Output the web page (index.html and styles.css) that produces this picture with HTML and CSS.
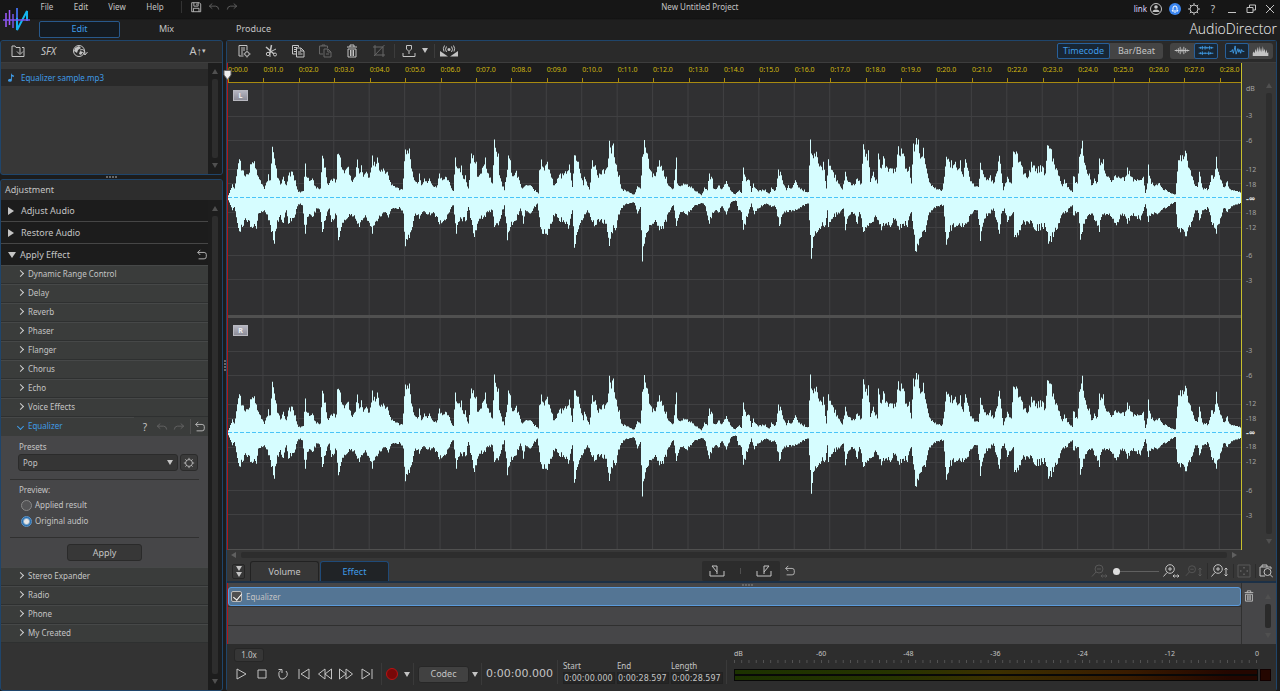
FILE: index.html
```html
<!DOCTYPE html>
<html lang="en">
<head>
    <meta charset="UTF-8">
    <meta name="viewport" content="width=device-width, initial-scale=1.0">
    <title>AudioDirector - New Untitled Project</title>
    <link rel="stylesheet" href="styles.css">
</head>
<body>
    <!-- shared icons -->
    <svg class="sprite" aria-hidden="true">
        <symbol id="i-save" viewBox="0 0 14 14"><path d="M2 2h9l1.500 1.500V12.500H2zM4.500 2v4h5V2M4 12.500V8.500h6.500v4M8 3v2"/></symbol>
        <symbol id="i-back" viewBox="0 0 14 14"><path d="M5 3L1.500 6L5 9M1.500 6H9q3 0 3.500 4"/></symbol>
        <symbol id="i-forward" viewBox="0 0 14 14"><path d="M9 3l3.500 3L9 9M12.500 6H5q-3 0-3.500 4"/></symbol>
        <symbol id="i-reset" viewBox="0 0 14 14"><path d="M5 1L2 4l3 3M2 4h7.500q2.500 0 2.500 2.500v2.500q0 2.500-2.500 2.500H3"/></symbol>
        <symbol id="i-gear" viewBox="0 0 14 14"><circle cx="7" cy="7" r="4"/><path d="M7 1v2M7 11v2M1 7h2M11 7h2M2.800 2.800l1.400 1.400M9.800 9.800l1.400 1.400M2.800 11.200l1.400-1.400M9.800 4.200l1.400-1.400"/></symbol>
        <symbol id="i-import" viewBox="0 0 14 14"><path d="M5 3.500L4 2H1v10.500h12v-9h-2M5 3.500h4v6M6 7.500l3 3 3-3"/></symbol>
        <symbol id="i-globe" viewBox="0 0 16 14"><circle cx="7" cy="7" r="5.500"/><path class="solid" d="M3 4l4-2 2 2-3 2-1 3-3-2zM8 7l3 1-2 3-2-1z"/><path d="M8 6q5-2 5 4M10.500 8l2.500 3 2.500-3"/></symbol>
        <symbol id="i-list" viewBox="0 0 14 14"><path d="M6.500 12H2V1.500h8V6M4 4h4M4 6h4M4 8h2M4 10h2"/><circle cx="10" cy="10" r="2.200"/><path d="M10 6.500v1.300M10 12.200v1.300M6.500 10h1.300M12.200 10h1.300"/></symbol>
        <symbol id="i-cut" viewBox="0 0 14 14"><path stroke-width="1.500" d="M2 3l8 7M7.500 1L6 9"/><path d="M12 5L5 8.500"/><circle cx="4" cy="10" r="1.700"/><circle cx="11" cy="10.500" r="1.500"/><path d="M6 9v4"/></symbol>
        <symbol id="i-copy" viewBox="0 0 14 14"><path d="M5.500 10H1.500V1.500h6V3M3 3.500h3M3 5.500h2M3 7.500h2M5.500 4h4.500l3 3v6H5.500zM9.800 4v3H13M7 8h3M7 10h4.500"/></symbol>
        <symbol id="i-paste" viewBox="0 0 14 14"><path d="M5 10H1.500V2h8v2M4 2V1h3v1M6 5h4l3 3v5H6zM9.800 5v3H13M8 10h3"/></symbol>
        <symbol id="i-trash" viewBox="0 0 14 14"><path d="M2 3h10M5 3V1h4v2M3 5h8v8H3zM5.500 6v6M7 6v6M8.500 6v6"/></symbol>
        <symbol id="i-crop" viewBox="0 0 14 14"><path d="M3 1v10h10M1 3h10v10M12.500 1L2 12"/></symbol>
        <symbol id="i-marker" viewBox="0 0 14 14"><path d="M1 9v3.500h12V9M4.500 1.500h5v3.500L7 7.500 4.500 5zM7 7.500V10"/></symbol>
        <symbol id="i-live" viewBox="0 0 18 14"><path class="solid" d="M0 7l8 5.500H0zM18 7l-8 5.500h8z"/><circle class="solid" cx="9" cy="5.500" r="1.500"/><path d="M6.500 2.500q-2 3 0 5.500M11.500 2.500q2 3 0 5.500M4.500 1.500q-2 3-.5 6M13.500 1.500q2 3 .5 6"/></symbol>
        <symbol id="i-in" viewBox="0 0 16 14"><path d="M1 7v5h14V7M3 2h5v6zM8 8v2"/></symbol>
        <symbol id="i-out" viewBox="0 0 16 14"><path d="M1 7v5h14V7M13 2H8v6zM8 8v2"/></symbol>
        <symbol id="i-minus" viewBox="0 0 16 16"><circle cx="8" cy="6" r="4"/><path d="M5 9l-4 4.500M6 6h4"/></symbol>
        <symbol id="i-plus" viewBox="0 0 16 16"><circle cx="7" cy="6" r="4.300"/><path d="M4 9.500l-3.500 4M5 6h4M7 4v4"/></symbol>
        <symbol id="i-lr" viewBox="0 0 8 6"><path d="M1 3h6M2.500 1.500L1 3l1.500 1.500M5.500 1.500L7 3 5.500 4.500"/></symbol>
        <symbol id="i-ud" viewBox="0 0 6 10"><path d="M3 1v8M1.500 2.500L3 1l1.500 1.500M1.500 7.500L3 9l1.500-1.500"/></symbol>
    </svg>

    <div class="app">
        <header class="header">
            <svg class="logo" viewBox="0 0 28 26">
                <g fill="none" stroke-width="1.500">
                    <path stroke="#a05cff" d="M3 6v14M6.500 3v15"/>
                    <path stroke="#7458e8" d="M10 7v14"/>
                    <path stroke="#14b4f0" stroke-width="2" d="M14 1v22L24 4v10"/>
                    <path stroke="#4c4ccf" d="M14 1v10"/>
                    <path stroke="#7d50f0" d="M0 13h27"/>
                </g>
            </svg>
            <div class="header-main">
                <div class="titlebar">
                    <nav class="menu">
                        <button>File</button>
                        <button>Edit</button>
                        <button>View</button>
                        <button>Help</button>
                    </nav>
                    <div class="quick">
                        <button aria-label="Save"><svg class="icon sm"><use href="#i-save"/></svg></button>
                        <button class="off" aria-label="Undo"><svg class="icon sm"><use href="#i-back"/></svg></button>
                        <button class="off" aria-label="Redo"><svg class="icon sm"><use href="#i-forward"/></svg></button>
                    </div>
                    <h1 class="title">New Untitled Project</h1>
                    <div class="window-tools">
                        <a href="#" class="user">link</a>
                        <button aria-label="Account"><svg class="icon" viewBox="0 0 14 14"><circle cx="7" cy="7" r="5.500"/><circle class="solid" cx="7" cy="5" r="1.800"/><path class="solid" d="M3.500 10q0-2.500 3.500-2.500t3.500 2.500z"/></svg></button>
                        <button aria-label="Notifications"><svg class="icon bell" viewBox="0 0 14 14"><circle class="disc" cx="7" cy="7" r="6"/><path d="M4 9h6l-1-1.500V6q0-2-2-2T5 6v1.500zM6.500 10.500h1"/></svg></button>
                        <button aria-label="Settings"><svg class="icon"><use href="#i-gear"/></svg></button>
                        <button class="help" aria-label="Help">?</button>
                        <button aria-label="Minimize"><svg class="icon sm" viewBox="0 0 12 12"><path d="M2 9.500h8"/></svg></button>
                        <button aria-label="Restore"><svg class="icon sm" viewBox="0 0 12 12"><path d="M2 4.500h6v5H2zM4.500 4.500v-2.500h6v5H8"/></svg></button>
                        <button aria-label="Close"><svg class="icon sm" viewBox="0 0 12 12"><path d="M2 2l8 8M10 2l-8 8"/></svg></button>
                    </div>
                </div>
                <div class="modes">
                    <button class="mode active">Edit</button>
                    <button class="mode">Mix</button>
                    <button class="mode">Produce</button>
                    <span class="brand">AudioDirector</span>
                </div>
            </div>
        </header>

        <div class="workspace">
            <aside class="sidebar">
                <section class="panel library">
                    <div class="toolbar">
                        <button aria-label="Import"><svg class="icon"><use href="#i-import"/></svg></button>
                        <button class="sfx">SFX</button>
                        <button aria-label="Download"><svg class="icon wide"><use href="#i-globe"/></svg></button>
                        <button class="font-size">A↑<small>▾</small></button>
                    </div>
                    <div class="scroll-area">
                        <div class="files">
                            <a href="#" class="file">
                                <svg class="note" viewBox="0 0 8 10"><path d="M4 0q0 2 3.500 3-0 1-1 1.500L5 3.500V8q0 1.800-2.200 1.800T.6 8.300 3.200 6.500L4 6.700z"/></svg>
                                Equalizer sample.mp3
                            </a>
                        </div>
                        <div class="scrollbar"><i></i></div>
                    </div>
                </section>

                <div class="grip"></div>

                <section class="panel adjustment">
                    <h2>Adjustment</h2>
                    <div class="scroll-area">
                        <div class="accordion">
                            <button class="group"><i class="tri"></i>Adjust Audio</button>
                            <button class="group"><i class="tri"></i>Restore Audio</button>
                            <div class="group open">
                                <button><i class="tri down"></i>Apply Effect</button>
                                <button aria-label="Reset effects"><svg class="icon sm"><use href="#i-reset"/></svg></button>
                            </div>
                            <button class="effect">Dynamic Range Control</button>
                            <button class="effect">Delay</button>
                            <button class="effect">Reverb</button>
                            <button class="effect">Phaser</button>
                            <button class="effect">Flanger</button>
                            <button class="effect">Chorus</button>
                            <button class="effect">Echo</button>
                            <button class="effect">Voice Effects</button>
                            <div class="effect-head">
                                <button class="effect open">Equalizer</button>
                                <button class="help" aria-label="Help">?</button>
                                <button class="off" aria-label="Undo"><svg class="icon sm"><use href="#i-back"/></svg></button>
                                <button class="off" aria-label="Redo"><svg class="icon sm"><use href="#i-forward"/></svg></button>
                                <button class="reset" aria-label="Reset"><svg class="icon sm"><use href="#i-reset"/></svg></button>
                            </div>
                            <div class="effect-body">
                                <label for="preset">Presets</label>
                                <div class="preset-row">
                                    <div class="select">
                                        <select id="preset">
                                            <option>Pop</option>
                                        </select>
                                        <i class="caret"></i>
                                    </div>
                                    <button class="gear" aria-label="Preset settings"><svg class="icon sm"><use href="#i-gear"/></svg></button>
                                </div>
                                <fieldset>
                                    <legend>Preview:</legend>
                                    <label><input type="radio" name="preview">Applied result</label>
                                    <label><input type="radio" name="preview" checked>Original audio</label>
                                </fieldset>
                                <button class="apply">Apply</button>
                            </div>
                            <button class="effect">Stereo Expander</button>
                            <button class="effect">Radio</button>
                            <button class="effect">Phone</button>
                            <button class="effect">My Created</button>
                        </div>
                        <div class="scrollbar"><i></i></div>
                    </div>
                </section>
            </aside>

            <div class="grip vertical"></div>

            <main class="panel editor">
                <div class="toolbar">
                    <button aria-label="Properties"><svg class="icon"><use href="#i-list"/></svg></button>
                    <button aria-label="Cut"><svg class="icon"><use href="#i-cut"/></svg></button>
                    <button aria-label="Copy"><svg class="icon"><use href="#i-copy"/></svg></button>
                    <button class="off" aria-label="Paste"><svg class="icon"><use href="#i-paste"/></svg></button>
                    <button aria-label="Delete"><svg class="icon"><use href="#i-trash"/></svg></button>
                    <button class="off" aria-label="Trim"><svg class="icon"><use href="#i-crop"/></svg></button>
                    <div class="marker">
                        <button aria-label="Marker"><svg class="icon"><use href="#i-marker"/></svg></button>
                        <button aria-label="Marker options"><i class="caret"></i></button>
                    </div>
                    <button aria-label="Voice over"><svg class="icon live"><use href="#i-live"/></svg></button>

                    <div class="views">
                        <div class="switch text">
                            <button class="active">Timecode</button>
                            <button>Bar/Beat</button>
                        </div>
                        <div class="switch">
                            <button aria-label="Mono view"><svg class="icon view" viewBox="0 0 18 12"><path d="M1 6h16M3 5v2M5 3.500v5M7 2v8M9 4v4M11 2v8M13 3.500v5M15 5v2"/></svg></button>
                            <button class="active" aria-label="Stereo view"><svg class="icon view" viewBox="0 0 18 12"><path d="M1 3h16M1 9h16M3 2v2M5 1v4M8 1v4M10 2v2M13 1v4M15 2v2M3 8v2M5 7v4M8 8v2M12 7v4M14 8v2"/></svg></button>
                        </div>
                        <div class="switch">
                            <button class="active" aria-label="Waveform"><svg class="icon view" viewBox="0 0 18 12"><path d="M1 7h2l1-2 1 4 2-8 1 9 2-6 1 4 1-3 1 4 1-4 1 2h2"/></svg></button>
                            <button aria-label="Spectrum"><svg class="icon view" viewBox="0 0 18 12"><path class="solid" d="M0 12V9l1-2 1 2 1-5 1 4 1-6 1 6 1-7 1 6 1-4 1 5 1-7 1 6 1-3 1 5 1-4 1 4 1-1v4z"/></svg></button>
                        </div>
                    </div>
                </div>

                <div class="stage">
                    <div class="timeline">
                        <div class="ruler" id="ruler"></div>
                        <div class="channel"><b>L</b><svg class="wave" viewBox="0 0 3039 693" preserveAspectRatio="none"></svg></div>
                        <div class="channel"><b>R</b><svg class="wave" viewBox="0 0 3039 693" preserveAspectRatio="none"></svg></div>
                        <svg class="playhead" viewBox="0 0 8 10"><path d="M.5.500h7V5L4 9.500.5 5z"/></svg>
                    </div>
                    <div class="levels">
                        <div class="scale"><span>dB</span><span>-3</span><span>-6</span><span>-12</span><span>-18</span><strong>-∞</strong><span>-18</span><span>-12</span><span>-6</span><span>-3</span></div>
                        <div class="scale"><span></span><span>-3</span><span>-6</span><span>-12</span><span>-18</span><strong>-∞</strong><span>-18</span><span>-12</span><span>-6</span><span>-3</span></div>
                    </div>
                    <div class="scrollbar"><i></i></div>
                </div>
                <div class="scrollbar across"><i></i></div>

                <div class="lane-bar">
                    <div class="lane-tabs">
                        <button class="collapse" aria-label="Collapse"><i class="caret"></i><i class="caret"></i></button>
                        <button class="tab">Volume</button>
                        <button class="tab active">Effect</button>
                    </div>
                    <div class="range-tools">
                        <div class="range-set">
                            <button aria-label="Mark in"><svg class="icon wide"><use href="#i-in"/></svg></button>
                            <i></i>
                            <button aria-label="Mark out"><svg class="icon wide"><use href="#i-out"/></svg></button>
                        </div>
                        <button aria-label="Reset range"><svg class="icon sm"><use href="#i-reset"/></svg></button>
                    </div>
                    <div class="zoom-tools">
                        <button class="off" aria-label="Zoom out"><svg class="icon zoom" viewBox="0 0 18 16"><use href="#i-minus" width="16" height="16"/><use href="#i-lr" x="9" y="10" width="8" height="6"/></svg></button>
                        <input type="range" min="0" max="100" value="0" aria-label="Zoom">
                        <button aria-label="Zoom in"><svg class="icon zoom" viewBox="0 0 18 16"><use href="#i-plus" width="16" height="16"/><use href="#i-lr" x="9" y="10" width="8" height="6"/></svg></button>
                        <button class="off" aria-label="Zoom out vertically"><svg class="icon zoom" viewBox="0 0 18 16"><use href="#i-minus" width="14" height="14" y="1"/><use href="#i-ud" x="12" y="4" width="6" height="10"/></svg></button>
                        <button class="ruled" aria-label="Zoom in vertically"><svg class="icon zoom" viewBox="0 0 18 16"><use href="#i-plus" width="16" height="16"/><use href="#i-ud" x="12" y="4" width="6" height="10"/></svg></button>
                        <button class="ruled off" aria-label="Fit"><svg class="icon" viewBox="0 0 14 14"><path d="M1 1h12v12H1zM7 3v2M7 9v2M3 7h2M9 7h2M6 4l1-1 1 1M6 10l1 1 1-1M4 6L3 7l1 1M10 6l1 1-1 1"/></svg></button>
                        <button class="ruled" aria-label="Zoom to selection"><svg class="icon" viewBox="0 0 14 14"><path d="M6 12H1V3h11v2M3 3V1h5v2"/><circle cx="8.500" cy="8" r="3.500"/><path d="M11 10.500l3 3"/></svg></button>
                    </div>
                </div>

                <div class="lanes">
                    <div class="lane-list">
                        <label class="lane applied"><input type="checkbox" checked>Equalizer</label>
                        <div class="lane"></div>
                        <div class="lane"></div>
                    </div>
                    <div class="lane-side"><button aria-label="Delete effect"><svg class="icon sm"><use href="#i-trash"/></svg></button></div>
                    <div class="scrollbar"><i></i></div>
                    <div class="grip"></div>
                </div>

                <footer class="transport">
                    <div class="player">
                        <button class="speed">1.0x</button>
                        <div class="buttons">
                            <button aria-label="Play"><svg class="icon" viewBox="0 0 14 14"><path d="M3 2l9 5-9 5z"/></svg></button>
                            <button aria-label="Stop"><svg class="icon" viewBox="0 0 14 14"><path d="M3 3h8v8H3z"/></svg></button>
                            <button aria-label="Loop"><svg class="icon" viewBox="0 0 14 14"><path d="M10 4q2 2 1 4.500T7 12t-4-3 1.500-5.500M2.500 2.500H6V6"/></svg></button>
                            <button aria-label="Previous"><svg class="icon" viewBox="0 0 14 14"><path d="M2 2v10M12 2v10L4 7z"/></svg></button>
                            <button aria-label="Rewind"><svg class="icon" viewBox="0 0 14 14"><path d="M7 2v10L.5 7zM13.500 2v10L7 7z"/></svg></button>
                            <button aria-label="Fast forward"><svg class="icon" viewBox="0 0 14 14"><path d="M.5 2v10L7 7zM7 2v10l6.500-5z"/></svg></button>
                            <button aria-label="Next"><svg class="icon" viewBox="0 0 14 14"><path d="M2 2v10l8-5zM12 2v10"/></svg></button>
                            <div class="ruled">
                                <button class="record" aria-label="Record"></button>
                                <button aria-label="Record options"><i class="caret"></i></button>
                            </div>
                            <div class="ruled codec">
                                <button class="boxed">Codec</button>
                                <button aria-label="Codec options"><i class="caret"></i></button>
                            </div>
                            <output class="ruled clock">0:00:00.000</output>
                        </div>
                    </div>
                    <div class="times">
                        <label>Start<input type="text" value="0:00:00.000"></label>
                        <label>End<input type="text" value="0:00:28.597"></label>
                        <label>Length<input type="text" value="0:00:28.597"></label>
                    </div>
                    <div class="meter">
                        <div class="meter-labels"><span class="unit">dB</span><span>-60</span><span>-48</span><span>-36</span><span>-24</span><span>-12</span><span>0</span></div>
                        <div class="meter-ticks"></div>
                        <div class="meter-bars"><div class="bars"></div><div class="clip"></div></div>
                    </div>
                </footer>
            </main>
        </div>
    </div>
    <script src="script.js"></script>
</body>
</html>
```

FILE: styles.css
```css
* {
    box-sizing: border-box;
}
body {
    margin: 0;
    background: #1c1c1c;
    color: #c4c4c4;
    font-family: "Noto Sans", "Open Sans", sans-serif;
    font-size: 8px;
    line-height: 12px;
}
button {
    display: flex;
    align-items: center;
    justify-content: center;
    margin: 0;
    padding: 0;
    border: none;
    background: none;
    color: inherit;
    font: inherit;
    cursor: pointer;
}
a {
    color: inherit;
    text-decoration: none;
}
.sprite {
    position: absolute;
    width: 0;
    height: 0;
}
.icon {
    display: block;
    flex: none;
    width: 14px;
    height: 14px;
    fill: none;
    stroke: currentColor;
    stroke-width: 1;
}
.icon.sm {
    width: 12px;
    height: 12px;
}
.icon.wide {
    width: 16px;
}
.icon.live, .icon.zoom {
    width: 18px;
}
.icon.zoom {
    height: 16px;
}
.icon.view {
    width: 18px;
    height: 11px;
}
.solid {
    fill: currentColor;
    stroke: none;
}
.off {
    color: #666;
}
.caret {
    width: 0;
    height: 0;
    border: 3px solid transparent;
    border-top: 5px solid #c4c4c4;
    border-bottom: none;
}
.app {
    display: flex;
    flex-direction: column;
    height: 100vh;
    min-height: 600px;
}

/* header */
.header {
    display: flex;
    flex: none;
    height: 40px;
    background: linear-gradient(#161616 18px, #101010 18px, #1f1f1f 20px);
}
.logo {
    width: 28px;
    height: 26px;
    margin: 7px 0 0 3px;
}
.header-main {
    flex: 1;
    padding: 0 3px 0 8px;
}
.titlebar {
    display: flex;
    align-items: center;
    height: 19px;
    padding-bottom: 5px;
}
.menu {
    display: flex;
    font-size: 8px;
}
.menu button {
    width: 36px;
    height: 14px;
}
.menu button:first-child {
    width: 16px;
    margin-right: 8px;
}
.menu button:last-child {
    margin-left: 2px;
}
.quick {
    display: flex;
    gap: 6px;
    margin-left: 8px;
    padding-left: 8px;
    border-left: 1px solid #333;
}
.title {
    flex: 1;
    margin: 0;
    padding-left: 28px;
    text-align: center;
    font-size: 8px;
    font-weight: 400;
}
.window-tools {
    display: flex;
    align-items: center;
    gap: 5px;
    padding-top: 4px;
}
.user {
    margin-right: -3px;
    color: #dcd4ff;
    font-size: 8px;
}
.bell {
    stroke: #fff;
}
.disc {
    fill: #3b86f0;
    stroke: none;
}
.help {
    width: 12px;
    font-size: 10px;
}
.window-tools .help {
    width: 14px;
}
.window-tools .help ~ button {
    width: 14px;
}
.modes {
    display: flex;
    align-items: center;
}
.mode {
    width: 81px;
    height: 17px;
    margin-right: 6px;
    border: 1px solid transparent;
    border-radius: 2px;
    font-size: 9px;
}
.mode.active {
    border-color: #28588a;
    background: #141a20;
    color: #3f9be6;
}
.brand {
    margin-left: auto;
    color: #f4f4f4;
    font-family: "Open Sans", sans-serif;
    font-size: 14px;
    font-weight: 300;
    line-height: 20px;
}

/* panels */
.workspace {
    display: flex;
    flex: 1;
    min-height: 0;
}
.sidebar {
    display: flex;
    flex-direction: column;
    flex: none;
    width: 223px;
}
.panel {
    display: flex;
    flex-direction: column;
    border: 1px solid #1f456b;
    border-radius: 3px;
    overflow: hidden;
    background: #373737;
}
.toolbar {
    display: flex;
    align-items: center;
    flex: none;
    height: 22px;
    padding-bottom: 2px;
    border-bottom: 1px solid #3d3d3d;
    background: #2a2a2a;
}
.library {
    flex: none;
    height: 135px;
}
.library .toolbar {
    gap: 16px;
    padding-right: 4px;
    padding-left: 10px;
}
.library .toolbar .font-size {
    margin-right: 12px;
}
.sfx {
    font-size: 10px;
    font-style: italic;
}
.font-size {
    margin-left: auto;
    font-size: 11px;
}
.font-size small {
    font-size: 7px;
}
.scroll-area {
    display: flex;
    flex: 1;
    min-height: 0;
}
.files {
    flex: 1;
    padding-top: 6px;
}
.file {
    display: flex;
    align-items: center;
    gap: 6px;
    height: 17px;
    padding-left: 6px;
    background: #292929;
    color: #3f9be6;
}
.note {
    width: 8px;
    height: 9px;
    fill: #3f9be6;
}
.scrollbar {
    display: flex;
    flex-direction: column;
    align-items: center;
    justify-content: space-between;
    flex: none;
    gap: 5px;
    width: 14px;
    padding: 6px 0;
    background: #1d1d1d;
}
.scrollbar::before, .scrollbar::after {
    content: "";
    border: 3px solid transparent;
    border-bottom: 5px solid #505050;
    border-top: none;
}
.scrollbar::after {
    border-top: 5px solid #505050;
    border-bottom: none;
}
.scrollbar i {
    flex: 1;
    width: 6px;
    border-radius: 2px;
    background: #2d2d2d;
}
.grip {
    align-self: center;
    flex: none;
    width: 11px;
    height: 4px;
    background: repeating-linear-gradient(90deg, #686868 0 2px, transparent 2px 3px) center / 11px 2px no-repeat;
}
.grip.vertical {
    width: 3px;
    height: 11px;
    background: repeating-linear-gradient(#686868 0 2px, transparent 2px 3px) center / 2px 11px no-repeat;
}

/* adjustment */
.adjustment {
    flex: 1;
    min-height: 0;
    background: #333;
}
.adjustment h2 {
    flex: none;
    height: 20px;
    margin: 0;
    padding-left: 4px;
    background: #2d2d2d;
    font-size: 9px;
    font-weight: 400;
    line-height: 20px;
}
.accordion {
    flex: 1;
    min-width: 0;
    overflow: hidden;
}
.group {
    justify-content: flex-start;
    width: 100%;
    height: 22px;
    border-bottom: 1px solid #464646;
    background: #1c1c1c;
    font-size: 9px;
}
.group.open {
    display: flex;
    justify-content: space-between;
    height: 21px;
    padding-right: 0;
    border: none;
}
.tri {
    width: 5px;
    margin: 0 7px;
    border: 4px solid transparent;
    border-left: 6px solid #c4c4c4;
    border-right: none;
}
.tri.down {
    width: 8px;
    margin: 0 4px 0 7px;
    border: 4px solid transparent;
    border-top: 6px solid #c4c4c4;
    border-bottom: none;
}
.effect {
    justify-content: flex-start;
    gap: 5px;
    width: 100%;
    height: 19px;
    padding: 0 0 2px 17px;
    border-top: 1px solid #464848;
    border-bottom: 1px solid #2e3030;
    background: #3a3c3b;
    font-size: 8px;
}
.effect::before {
    content: "";
    width: 4px;
    height: 4px;
    border: solid #d0d0d0;
    border-width: 1px 1px 0 0;
    transform: rotate(45deg);
}
.effect-head {
    display: flex;
    gap: 5px;
    background: #3a3c3b;
}
.effect.open {
    flex: 1;
    border-bottom: none;
    color: #3f9be6;
}
.effect.open::before {
    border-color: #3f9be6;
    transform: rotate(135deg);
}
.reset {
    width: 18px;
    margin: 2px 0;
    border-left: 1px solid #505050;
}
.effect-body {
    padding: 5px 9px 6px;
    background: #464648;
}
.effect-body > label {
    display: block;
    padding-left: 9px;
}
.preset-row {
    display: flex;
    gap: 2px;
    margin-bottom: 8px;
    padding: 1px 1px 0 8px;
}
.select {
    position: relative;
    flex: 1;
}
.select select {
    appearance: none;
    display: block;
    width: 100%;
    height: 17px;
    padding: 0 4px;
    border: 1px solid #2b2b2b;
    border-radius: 3px;
    background: #353535;
    color: inherit;
    font: inherit;
}
.select .caret {
    position: absolute;
    top: 6px;
    right: 5px;
    pointer-events: none;
}
.gear {
    width: 18px;
    height: 17px;
    border: 1px solid #2b2b2b;
    border-radius: 3px;
    background: #3a3a3a;
}
fieldset {
    margin: 0;
    padding: 4px 9px 8px;
    border: solid #303030;
    border-width: 1px 0;
}
legend {
    float: left;
    width: 100%;
    height: 13px;
    padding: 0;
}
fieldset label {
    display: flex;
    clear: both;
    align-items: center;
    gap: 3px;
    height: 16px;
    padding-left: 2px;
}
input[type="radio"] {
    appearance: none;
    width: 11px;
    height: 11px;
    margin: 0;
    border: 1px solid #888;
    border-radius: 50%;
    background: #545456;
}
input[type="radio"]:checked {
    border-color: #5f95c8;
    background: radial-gradient(#e6e6e6 2px, #256cad 4px);
}
.apply {
    width: 75px;
    height: 17px;
    margin: 6px auto 0;
    border: 1px solid #2a2a2a;
    border-radius: 3px;
    background: #373737;
    font-size: 9px;
}

/* editor */
.editor {
    position: relative;
    flex: 1;
    min-width: 0;
    margin-right: 3px;
    overflow: visible;
    border-bottom: none;
}
.editor .toolbar {
    gap: 13px;
    padding-right: 3px;
    padding-left: 10px;
}
.marker {
    display: flex;
    align-items: center;
    gap: 6px;
    height: 14px;
    margin: 0 -8px 0 -5px;
    padding: 0 6px 0 7px;
    border: solid #3c3c3c;
    border-width: 0 1px;
}
.views {
    display: flex;
    gap: 7px;
    margin-left: auto;
}
.switch {
    display: flex;
    border-radius: 3px;
    background: #444;
    color: #c4c4c4;
}
.switch button {
    width: 24px;
    height: 16px;
    border: 1px solid transparent;
    border-radius: 2px;
}
.switch.text button {
    width: 53px;
    font-size: 9px;
}
.switch .active {
    border-color: #28609a;
    background: #182634;
    color: #3f9be6;
}
.stage {
    display: flex;
    flex: 1;
    min-height: 0;
}
.timeline {
    position: relative;
    display: flex;
    flex-direction: column;
    flex: 1;
    min-width: 0;
    border-left: 1px solid #b01818;
    border-right: 1px solid #c8c02c;
}
.ruler {
    display: grid;
    grid-template-columns: repeat(28, 1fr) 0.597fr;
    flex: none;
    height: 20px;
    border-bottom: 1px solid #a88a10;
    background: #1d1d1d;
    color: #d0b810;
    font-size: 7px;
    line-height: 13px;
}
.ruler span {
    min-width: 0;
    background: linear-gradient(#a88a10, #a88a10) 0 100% / 1px 4px no-repeat;
    white-space: nowrap;
}
.channel {
    position: relative;
    flex: 1;
    min-height: 0;
    border-bottom: 1px solid #505050;
    background: linear-gradient(90deg, transparent calc(100% - 1px), #404042 calc(100% - 1px)) 0 0 / calc(100% / 28.597) 100% #303032;
}
.channel + .channel {
    border-top: 2px solid #505050;
}
.wave {
    display: block;
    width: 100%;
    height: 100%;
}
.wave .line {
    stroke: #404042;
    stroke-width: 3;
    shape-rendering: crispEdges;
}
.wave .shape {
    fill: #d6fdff;
}
.wave .zero {
    stroke: #48c4f8;
    stroke-width: 3;
    stroke-dasharray: 12 6;
    shape-rendering: crispEdges;
}
.channel b {
    position: absolute;
    top: 7px;
    left: 5px;
    width: 15px;
    height: 11px;
    border: 1px solid #b8b8c0;
    background: linear-gradient(#b4b4c0, #8c8c98);
    color: #eee;
    font-size: 7px;
    line-height: 9px;
    text-align: center;
}
.playhead {
    position: absolute;
    top: 7px;
    left: -5px;
    width: 9px;
    height: 10px;
    fill: #eee;
    stroke: #666;
}
.levels {
    display: flex;
    flex-direction: column;
    width: 20px;
    padding: 20px 0 0 4px;
    font-size: 7px;
}
.scale {
    display: grid;
    flex: 1;
    grid-template-rows: 12fr 27fr 25fr 28fr 15fr 14fr 14fr 15fr 28fr 25fr 28fr;
    min-height: 0;
}
.scale + .scale {
    padding-top: 2px;
}
.scale > * {
    align-self: end;
    height: 12px;
    color: #a4a4a4;
}
.scale strong {
    color: #ddd;
    font-size: 9px;
}
.stage .scrollbar {
    margin-top: 14px;
    background: none;
}
.scrollbar.across {
    flex-direction: row;
    width: auto;
    height: 9px;
    margin-right: 35px;
    padding: 0 4px;
    background: none;
}
.scrollbar.across::before {
    border: 3px solid transparent;
    border-right: 5px solid #606060;
    border-left: none;
}
.scrollbar.across::after {
    border: 3px solid transparent;
    border-left: 5px solid #606060;
    border-right: none;
}
.scrollbar.across i {
    height: 6px;
}

/* lanes */
.lane-bar {
    display: grid;
    grid-template-columns: 1fr auto 1fr;
    flex: none;
    height: 24px;
    border-bottom: 2px solid #1c3046;
}
.lane-tabs {
    display: flex;
    align-items: flex-end;
    gap: 1px;
    padding-left: 5px;
}
.collapse {
    flex-direction: column;
    gap: 1px;
    width: 13px;
    height: 15px;
    margin: 0 4px 2px 0;
    border: 1px solid #262626;
    border-radius: 2px;
}
.tab {
    width: 69px;
    height: 20px;
    border: 1px solid #222;
    border-bottom: none;
    border-radius: 3px 3px 0 0;
    font-size: 9px;
}
.tab.active {
    border-color: #1f4a78;
    background: #202326;
    color: #3f9be6;
}
.range-tools {
    display: flex;
    align-items: center;
    gap: 4px;
    padding: 2px 6px 0 0;
}
.range-set {
    display: flex;
    align-items: center;
    justify-content: space-around;
    width: 78px;
    height: 20px;
    border-radius: 2px;
    background: #2c2c2c;
}
.range-set i {
    width: 1px;
    height: 6px;
    background: #505050;
}
.zoom-tools {
    display: flex;
    align-items: center;
    justify-content: flex-end;
    gap: 4px;
    padding: 2px 3px 0 0;
}
.zoom-tools .off {
    color: #585858;
}
input[type="range"] {
    appearance: none;
    width: 46px;
    height: 10px;
    margin: 0;
    background: linear-gradient(#606060, #606060) center / 100% 1px no-repeat;
}
input[type="range"]::-webkit-slider-thumb {
    appearance: none;
    width: 7px;
    height: 7px;
    border-radius: 50%;
    background: #ddd;
}
.zoom-tools .ruled {
    padding-left: 3px;
    border-left: 1px solid #2c2c2c;
}
.lanes {
    position: relative;
    display: flex;
    flex: none;
    height: 61px;
    background: #464648;
}
.lanes .grip {
    position: absolute;
    top: 0;
    left: 50%;
    margin-left: -10px;
}
.lane-list {
    flex: 1;
    padding-top: 4px;
    border-left: 1px solid #b01818;
    border-right: 1px solid #303030;
}
.lane {
    display: flex;
    align-items: center;
    gap: 4px;
    height: 19px;
    border-top: 1px solid #303030;
}
.lane.applied {
    padding-left: 2px;
    border: 1px solid #5b9bdc;
    border-radius: 3px;
    background: #547594;
}
input[type="checkbox"] {
    appearance: none;
    width: 11px;
    height: 11px;
    margin: 0;
    border: 1px solid #bbb;
    border-radius: 2px;
    background: #505050;
}
input[type="checkbox"]::after {
    content: "";
    display: block;
    width: 4px;
    height: 7px;
    margin: 0 0 0 3px;
    border: solid #fff;
    border-width: 0 1px 1px 0;
    transform: rotate(40deg);
}
.lane-side {
    width: 17px;
    padding: 7px 0 0 1px;
}
.lanes .scrollbar {
    width: 17px;
    padding: 11px 0 6px;
    background: none;
}
.lanes .scrollbar i {
    background: #2a2a2a;
}

/* transport */
.transport {
    display: flex;
    flex: none;
    height: 47px;
    background: #2d2d2d;
}
.speed {
    width: 30px;
    height: 14px;
    margin: 4px 0 0 7px;
    border: 1px solid #262626;
    border-radius: 3px;
    background: #363636;
}
.boxed {
    width: 51px;
    height: 17px;
    border: 1px solid #272727;
    border-radius: 3px;
    background: #414141;
    font-size: 9px;
}
.buttons {
    display: flex;
    align-items: center;
    gap: 7px;
    height: 24px;
    padding-left: 7px;
}
.buttons .ruled {
    display: flex;
    align-items: center;
    gap: 6px;
    height: 22px;
    margin-right: -4px;
    padding-left: 4px;
    border-left: 1px solid #3a3a3a;
}
.record {
    width: 12px;
    height: 12px;
    border: 1px solid #b81414;
    border-radius: 50%;
    background: #780808;
}
.buttons .codec {
    gap: 3px;
}
.clock {
    font-family: "DejaVu Sans", sans-serif;
    font-size: 11px;
}
.times {
    display: flex;
    gap: 2px;
    height: 24px;
    margin: 16px 7px 0 8px;
    padding: 0 3px 0 5px;
    border: solid #3a3a3a;
    border-width: 0 1px;
}
.times label {
    display: flex;
    flex-direction: column;
    line-height: 12px;
}
.times input {
    width: 52px;
    height: 12px;
    padding: 0;
    border: 1px solid #222;
    background: #252525;
    color: #c4c4c4;
    font-family: "DejaVu Sans", sans-serif;
    font-size: 8px;
}
.meter {
    flex: 1;
    padding: 4px 5px 0 0;
}
.meter-labels {
    display: flex;
    justify-content: space-between;
    margin-right: 14px;
    height: 12px;
    font-size: 7px;
}
.meter-labels span {
    display: flex;
    justify-content: center;
    width: 0;
}
.meter-labels .unit {
    justify-content: flex-start;
}
.meter-ticks {
    height: 3px;
    margin: 0 13px 6px 0;
    background: linear-gradient(90deg, #555 1px, transparent 1px) 0 0 / calc((100% - 1px) / 72) 100%;
}
.meter-bars {
    display: flex;
    gap: 2px;
    height: 12px;
}
.bars {
    position: relative;
    flex: 1;
    border: 1px solid #080808;
    background: linear-gradient(transparent 4px, #080808 4px 6px, transparent 6px), linear-gradient(90deg, #1c3200, #263400 30%, #3c3000 50%, #3a1c00 75%, #240600 95%);
}
.clip {
    width: 11px;
    border: 1px solid #100;
    background: #240600;
}
```

FILE: script.js
```js
const svgNS = "http://www.w3.org/2000/svg";

// ruler: one cell per second
const ruler = document.getElementById("ruler");
for (let s = 0; s <= 28; s++) {
    const span = document.createElement("span");
    span.textContent = `0:${String(s).padStart(2, "0")}.0`;
    ruler.appendChild(span);
}

// envelope of the clip: x, y pairs, three units per sample column, y = 354 is silence
const centre = 354;
const parts = [
    {
        start: -9,
        top: [10,345,20,312,28,325,42,237,52,270,66,282,76,252,88,243,96,285,116,326,130,282,134,300,141,200,150,255,160,295,168,310,175,290,184,315,192,277,202,275,210,300,218,335,234,332,239,250,244,290,262,295,270,318,284,325,291,227,299,262,306,310,318,298,334,298,337,222,346,232,354,270,368,260,380,305,390,290,396,238,402,280,408,255,414,290,424,275,432,292,442,226,448,245,455,232,464,275,474,265,486,275,496,305,512,322,530,328,541,208,551,205,558,265,568,300,576,310,581,280,588,315,598,295,606,308,612,295,620,315,634,322,642,280,650,300,660,290,668,300,684,332,689,232,700,265,707,256,712,285,720,285,730,325,739,220,753,245,757,290,768,280,780,232,788,280,802,310,806,178,812,215,818,220,823,285,836,330,848,226,856,240,862,288,873,272,880,290,890,325,900,316,914,315,938,340,942,270,947,238,954,262,965,245,975,280,988,315,1006,280,1014,285,1032,253,1040,320],
        bottom: [10,360,22,390,28,380,42,453,52,440,64,420,76,440,92,445,100,400,116,390,130,420,146,490,154,445,162,410,174,428,184,390,190,430,206,412,220,372,232,375,239,460,246,410,262,410,276,385,286,395,291,455,300,420,312,385,318,425,334,405,339,480,348,440,370,410,386,405,402,440,420,405,441,460,460,415,480,395,490,412,500,385,526,385,534,400,541,498,558,450,570,400,582,415,592,395,615,405,625,395,642,432,660,420,670,400,684,375,692,460,700,425,722,420,730,380,748,470,762,415,780,410,788,395,802,390,806,440,820,435,836,375,845,480,855,440,872,420,885,385,893,430,900,390,915,400,936,370,944,440,952,460,966,464,978,430,990,400,1004,425,1014,420,1030,445,1040,390]
    },
    {
        start: 1026,
        top: [13,225,25,245,38,315,42,290,58,328,66,240,74,255,80,285,108,265,114,235,117,182,122,220,128,190,136,250,146,285,154,325,192,342,200,318,210,325,215,230,222,180,230,220,240,270,254,288,268,240,280,270,296,318,310,325,317,232,322,310,330,318,340,310,350,312,370,325,394,345,402,322,410,330,416,280,426,295,430,325,448,316,456,325,467,302,480,330,496,342,508,330,514,338,519,262,524,290,536,300,544,335,550,310,560,330,584,328,596,340,604,322,614,330,620,295,624,268,632,285,648,330,654,315,664,325,675,300,684,322,714,335,719,178,726,225,738,215,745,250,752,260,759,245,768,325,774,237,786,270,800,300,816,328,826,275,836,305,846,315,860,295,872,310,878,192,885,230,894,210,900,305,908,275,920,310,925,220,932,265,938,228,950,262,965,265,978,262,985,198,998,220,1008,265,1018,260,1024,310,1030,190,1044,178],
        bottom: [13,502,20,455,35,420,50,390,60,410,72,438,90,420,106,430,112,455,117,497,122,455,134,450,150,390,164,372,192,368,200,400,210,380,217,543,223,490,230,455,245,430,258,425,268,450,278,445,296,395,308,375,318,437,330,395,350,405,370,380,394,368,404,378,417,430,430,398,446,395,456,378,468,403,484,365,498,362,504,390,512,395,519,448,530,410,544,370,553,402,564,385,584,372,604,380,614,380,628,437,640,400,655,395,672,392,685,385,714,370,717,420,722,535,730,470,745,450,764,435,770,390,775,440,788,410,806,400,818,385,826,450,836,405,846,395,862,430,868,395,878,455,890,435,905,425,918,410,932,450,945,430,960,440,975,415,988,448,1000,430,1012,440,1024,395,1034,512,1044,495]
    },
    {
        start: 2046,
        top: [30,235,40,203,50,280,60,310,70,320,95,328,102,290,108,230,116,245,122,240,128,255,134,245,142,270,150,240,158,290,166,237,178,290,190,310,204,320,210,248,216,270,228,300,240,285,250,310,258,280,267,227,274,280,280,330,290,290,302,310,310,214,320,220,332,255,342,280,354,290,362,245,378,265,396,258,406,280,411,195,420,205,430,235,440,270,455,318,462,298,475,320,486,335,490,288,500,310,508,230,516,182,524,255,536,280,543,315,552,295,560,305,566,235,578,237,584,280,604,305,616,285,630,295,644,290,650,262,662,290,684,300,698,290,706,338,711,310,715,253,720,295,730,315,748,308,754,320,780,338,796,342,803,240,816,225,825,212,836,265,848,300,862,320,868,275,876,322,894,326,902,285,912,290,918,230,926,285,940,320,950,303,958,325,992,334],
        bottom: [32,470,44,455,55,405,68,385,98,375,108,493,116,455,134,440,152,440,168,430,185,400,202,390,210,482,222,415,240,400,250,385,267,460,274,400,282,385,292,425,308,395,313,470,324,465,336,430,356,430,375,450,404,440,414,490,428,470,440,445,456,400,472,395,486,375,490,405,504,395,511,478,522,430,542,400,566,455,572,410,598,400,617,435,635,400,650,430,664,405,690,420,704,372,714,425,724,400,740,402,770,380,795,365,802,440,825,468,840,440,852,400,862,390,868,420,878,390,894,385,902,425,917,460,928,430,940,385,950,395,965,378,992,370]
    }
];

function collect(side) {
    const points = [];
    parts.forEach(part => {
        for (let i = 0; i < part[side].length; i += 2) {
            // snap to a column so that narrow peaks keep their height
            const x = part.start + Math.round(part[side][i] / 3) * 3;
            points.push([x, part[side][i + 1] - centre]);
        }
    });
    return points;
}

// one value per column, with a little roughness between the peaks
function sample(points) {
    const values = [];
    let k = 0;
    for (let x = 0; x < 3039; x += 3) {
        while (k < points.length - 2 && points[k + 1][0] <= x) k++;
        const [x0, y0] = points[k];
        const [x1, y1] = points[k + 1];
        const t = Math.min(1, Math.max(0, (x - x0) / (x1 - x0)));
        const noise = Math.abs(Math.sin(x * 12.9898) * 43758.5453 % 1);
        values.push((y0 + (y1 - y0) * t) * (x === x0 ? 1 : 0.82 + noise * 0.24));
    }
    return values;
}

function wavePath() {
    const mid = 345;
    const top = sample(collect("top"));
    const bottom = sample(collect("bottom"));
    let d = `M0 ${mid}`;
    top.forEach((v, i) => { d += `V${Math.round(mid + v)}H${i * 3 + 3}`; });
    for (let i = bottom.length - 1; i >= 0; i--) {
        d += `V${Math.round(mid + bottom[i])}H${i * 3}`;
    }
    return d + "Z";
}

function addShape(svg, d, className) {
    const path = document.createElementNS(svgNS, "path");
    path.setAttribute("d", d);
    path.setAttribute("class", className);
    svg.appendChild(path);
}

const shape = wavePath();
document.querySelectorAll(".wave").forEach(svg => {
    [100, 173, 259, 302, 388, 432, 517, 589].forEach(y => addShape(svg, `M0 ${y}H3039`, "line"));
    addShape(svg, shape, "shape");
    addShape(svg, "M0 344H3039", "zero");
});
```
